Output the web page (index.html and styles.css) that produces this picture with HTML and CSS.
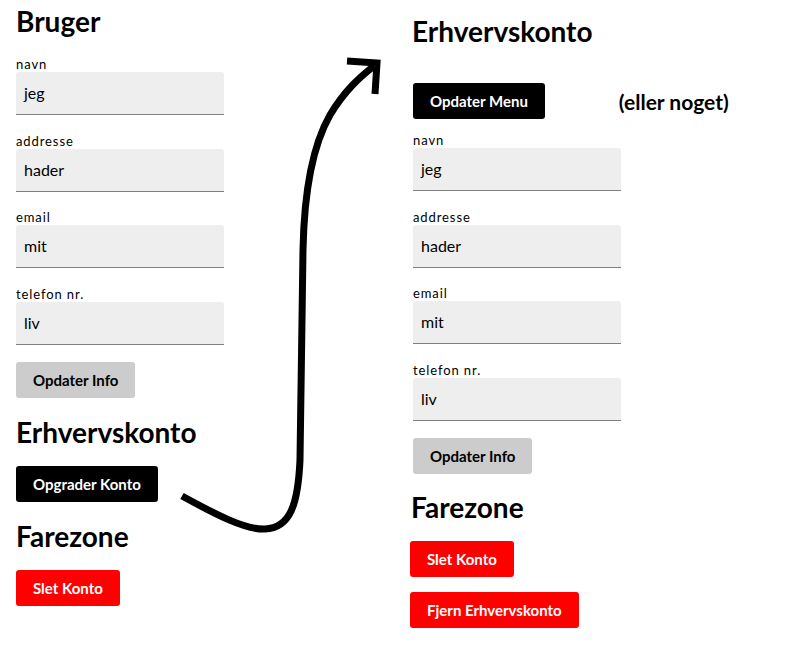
FILE: index.html
```html
<!DOCTYPE html>
<html lang="da">
<head>
<meta charset="utf-8">
<title>Bruger</title>
<link rel="stylesheet" href="styles.css">
</head>
<body>
<div class="page">
  <section class="col col-left">
    <h1 class="heading h-bruger">Bruger</h1>
    <div class="fields">
      <div class="field"><label class="label">navn</label><div class="input">jeg</div></div>
      <div class="field"><label class="label">addresse</label><div class="input">hader</div></div>
      <div class="field"><label class="label">email</label><div class="input">mit</div></div>
      <div class="field"><label class="label">telefon nr.</label><div class="input">liv</div></div>
    </div>
    <button class="btn btn-gray">Opdater Info</button>
    <h2 class="heading h-erhverv-left">Erhvervskonto</h2>
    <button class="btn btn-black">Opgrader Konto</button>
    <h2 class="heading h-fare-left">Farezone</h2>
    <button class="btn btn-red">Slet Konto</button>
  </section>

  <section class="col col-right">
    <h2 class="heading h-erhverv-right">Erhvervskonto</h2>
    <div class="menu-row">
      <button class="btn btn-black">Opdater Menu</button>
      <span class="note">(eller noget)</span>
    </div>
    <div class="fields">
      <div class="field"><label class="label">navn</label><div class="input">jeg</div></div>
      <div class="field"><label class="label">addresse</label><div class="input">hader</div></div>
      <div class="field"><label class="label">email</label><div class="input">mit</div></div>
      <div class="field"><label class="label">telefon nr.</label><div class="input">liv</div></div>
    </div>
    <button class="btn btn-gray">Opdater Info</button>
    <div class="danger">
      <h2 class="heading h-fare-right">Farezone</h2>
      <button class="btn btn-red">Slet Konto</button>
      <button class="btn btn-red btn-second">Fjern Erhvervskonto</button>
    </div>
  </section>

  <svg class="arrow" width="800" height="651" viewBox="0 0 800 651" aria-hidden="true">
    <path d="M182,496 C215,514 245,530 265,529 C290,528 298,505 300,460 L303,250 C304,200 310,150 330,115 C345,90 360,77 374,66" fill="none" stroke="#000" stroke-width="7"/>
    <path d="M347,61 L377,63 L375,94" fill="none" stroke="#000" stroke-width="7" stroke-linejoin="miter"/>
  </svg>
</div>
</body>
</html>
```

FILE: styles.css
```css
* { box-sizing: border-box; }

html, body {
  margin: 0;
  padding: 0;
  background: #fff;
}

body {
  font-family: Lato, "Noto Sans", "DejaVu Sans", sans-serif;
  color: #000;
}

.page {
  position: relative;
  display: flex;
  gap: 188px;
  padding: 5px 0 0 16px;
  width: 800px;
  height: 651px;
}

.col {
  display: flex;
  flex-direction: column;
  align-items: flex-start;
  width: 208px;
}

.col-right {
  padding-top: 10px;
  margin-left: 1px;
}

.heading {
  margin: 0;
  font-size: 28px;
  line-height: 32px;
  font-weight: 700;
}

.h-bruger { margin-bottom: 19px; }
.h-erhverv-left { margin-top: 18px; margin-bottom: 18px; }
.h-fare-left { margin-top: 18px; margin-bottom: 18px; }

.h-erhverv-right { margin-left: -1px; margin-bottom: 36px; }

.menu-row {
  display: flex;
  align-items: center;
  gap: 74px;
  margin-bottom: 13px;
  white-space: nowrap;
}

.note {
  font-size: 21px;
  font-weight: 700;
}

.fields {
  display: flex;
  flex-direction: column;
  gap: 17.6px;
  margin-bottom: 17px;
}

.field {
  display: flex;
  flex-direction: column;
  width: 208px;
}

.label {
  font-size: 13px;
  line-height: 16px;
  letter-spacing: 0.9px;
}

.input {
  height: 43px;
  padding: 0 8px;
  background: #eee;
  border-bottom: 1px solid #808080;
  border-radius: 3px 3px 0 0;
  font-size: 16px;
  line-height: 42px;
}

.btn {
  display: inline-flex;
  align-items: center;
  justify-content: center;
  height: 36px;
  padding: 0 17px;
  border: none;
  border-radius: 3px;
  font-family: inherit;
  font-size: 15px;
  font-weight: 700;
  white-space: nowrap;
}

.btn-gray { background: #ccc; color: #000; }
.btn-black { background: #000; color: #fff; }
.btn-red { background: #f00; color: #fff; }

.danger {
  display: flex;
  flex-direction: column;
  align-items: flex-start;
  margin-top: 17px;
  margin-left: -3px;
}

.h-fare-right { margin-left: 1px; margin-bottom: 18px; }
.btn-second { margin-top: 15px; }

.arrow {
  position: absolute;
  left: 0;
  top: 0;
  pointer-events: none;
}
```
